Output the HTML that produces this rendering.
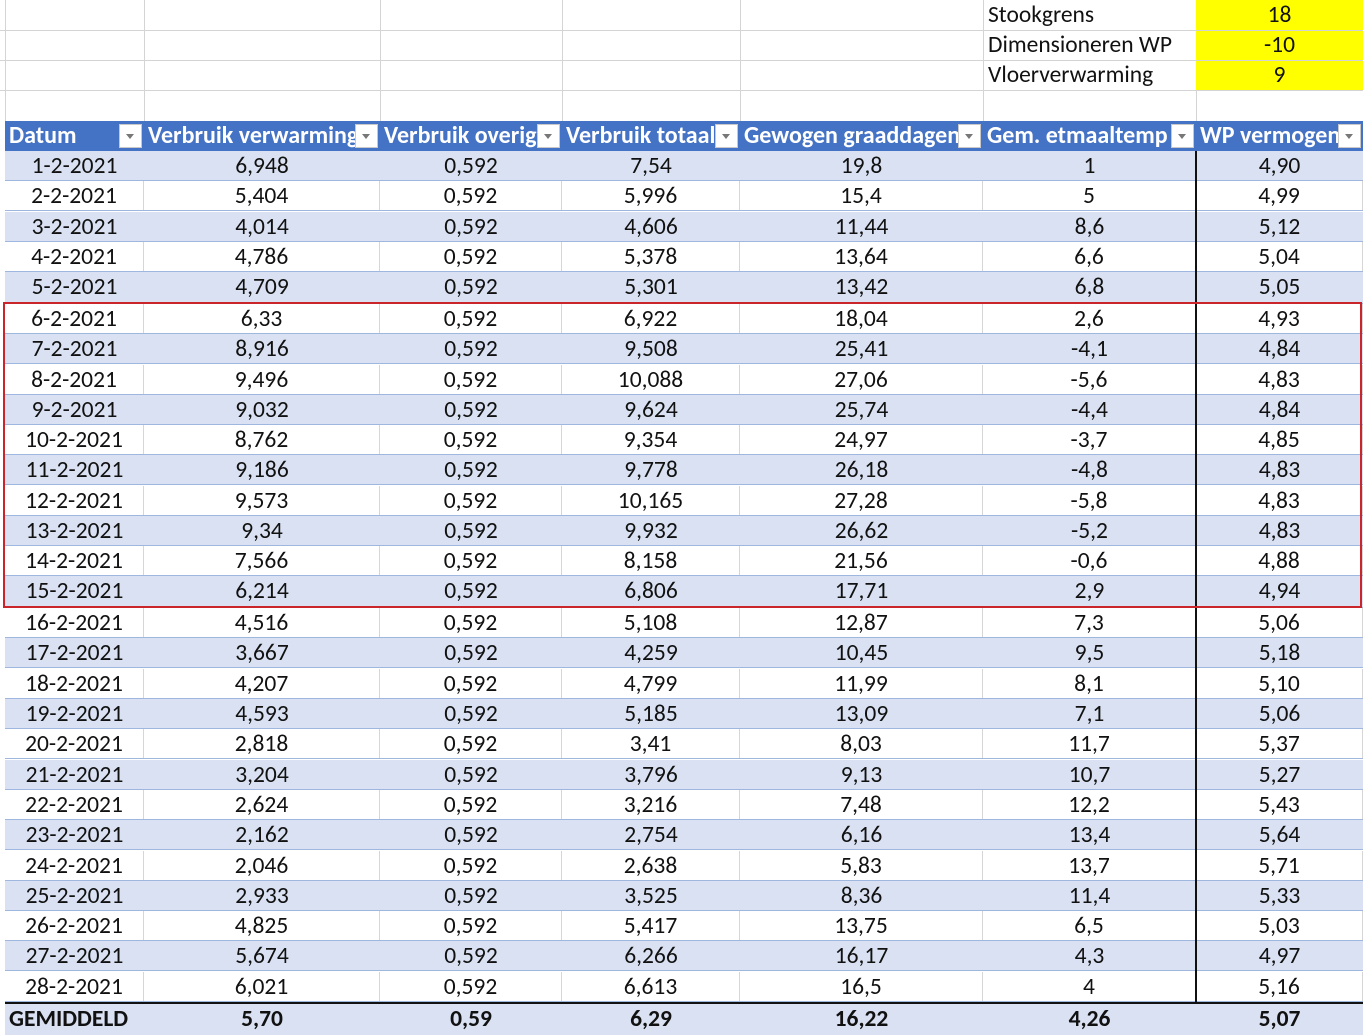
<!DOCTYPE html>
<html><head><meta charset="utf-8"><style>
body{margin:0;width:1363px;height:1035px;background:#fff;position:relative;overflow:hidden;font-family:Calibri,"Liberation Sans",sans-serif;color:#111}
.r{position:absolute;left:5px;width:1358px;height:30px;display:flex;font-size:23.5px;line-height:30px;box-sizing:border-box;border-bottom:1px solid #9fb6de}
.b{background:#d9e1f2}
.w{background:#fff}
.r span{display:block;text-align:center;overflow:hidden;white-space:nowrap;box-sizing:border-box}
.w span{border-right:1px solid #d6d6d6}
.c1{width:139px}.c2{width:236px}.c3{width:182px}.c4{width:178px}.c5{width:243px}.c6{width:213px}.c7{width:167px}
.h{position:absolute;top:121px;left:5px;width:1358px;height:30px;background:#4472c4;display:flex;color:#fff;font-weight:bold;font-size:24px;line-height:30px}
.h span{display:block;position:relative;overflow:hidden;white-space:nowrap;padding-left:4px;box-sizing:border-box}
.h span i{position:absolute;right:2px;top:3px;width:23px;height:24px;background:#fff;border:1px solid #c8c8c8;box-sizing:border-box}
.h span i:after{content:"";position:absolute;left:6px;top:9px;border-left:4px solid transparent;border-right:4px solid transparent;border-top:5px solid #777}
.g{position:absolute;background:#d4d4d4}
.t{position:absolute;font-size:23.5px;line-height:30px}
</style></head><body>
<div style="position:absolute;left:1196px;top:0;width:167px;height:90px;background:#ffff00"></div>
<div class="g" style="left:0;top:30px;width:1363px;height:1px"></div>
<div class="g" style="left:0;top:60px;width:1363px;height:1px"></div>
<div class="g" style="left:0;top:90px;width:1363px;height:1px"></div>
<div class="g" style="left:5px;top:0;width:1px;height:121px"></div>
<div class="g" style="left:144px;top:0;width:1px;height:121px"></div>
<div class="g" style="left:380px;top:0;width:1px;height:121px"></div>
<div class="g" style="left:562px;top:0;width:1px;height:121px"></div>
<div class="g" style="left:740px;top:0;width:1px;height:121px"></div>
<div class="g" style="left:983px;top:0;width:1px;height:121px"></div>
<div class="g" style="left:1196px;top:90px;width:1px;height:31px"></div>
<div class="t" style="left:988px;top:0">Stookgrens</div>
<div class="t" style="left:988px;top:30px">Dimensioneren WP</div>
<div class="t" style="left:988px;top:60px">Vloerverwarming</div>
<div class="t" style="left:1196px;width:167px;text-align:center;top:0">18</div>
<div class="t" style="left:1196px;width:167px;text-align:center;top:30px">-10</div>
<div class="t" style="left:1196px;width:167px;text-align:center;top:60px">9</div>

<div class="h"><span class="c1">Datum<i></i></span><span class="c2">Verbruik verwarming<i></i></span><span class="c3">Verbruik overig<i></i></span><span class="c4">Verbruik totaal<i></i></span><span class="c5">Gewogen graaddagen<i></i></span><span class="c6">Gem. etmaaltemp<i></i></span><span class="c7">WP vermogen<i></i></span></div>

<div class="r b" style="top:151px"><span class="c1">1-2-2021</span><span class="c2">6,948</span><span class="c3">0,592</span><span class="c4">7,54</span><span class="c5">19,8</span><span class="c6">1</span><span class="c7">4,90</span></div>
<div class="r w" style="top:181px"><span class="c1">2-2-2021</span><span class="c2">5,404</span><span class="c3">0,592</span><span class="c4">5,996</span><span class="c5">15,4</span><span class="c6">5</span><span class="c7">4,99</span></div>
<div class="r b" style="top:212px"><span class="c1">3-2-2021</span><span class="c2">4,014</span><span class="c3">0,592</span><span class="c4">4,606</span><span class="c5">11,44</span><span class="c6">8,6</span><span class="c7">5,12</span></div>
<div class="r w" style="top:242px"><span class="c1">4-2-2021</span><span class="c2">4,786</span><span class="c3">0,592</span><span class="c4">5,378</span><span class="c5">13,64</span><span class="c6">6,6</span><span class="c7">5,04</span></div>
<div class="r b" style="top:272px;height:32px"><span class="c1">5-2-2021</span><span class="c2">4,709</span><span class="c3">0,592</span><span class="c4">5,301</span><span class="c5">13,42</span><span class="c6">6,8</span><span class="c7">5,05</span></div>
<div class="r w" style="top:304px"><span class="c1">6-2-2021</span><span class="c2">6,33</span><span class="c3">0,592</span><span class="c4">6,922</span><span class="c5">18,04</span><span class="c6">2,6</span><span class="c7">4,93</span></div>
<div class="r b" style="top:334px"><span class="c1">7-2-2021</span><span class="c2">8,916</span><span class="c3">0,592</span><span class="c4">9,508</span><span class="c5">25,41</span><span class="c6">-4,1</span><span class="c7">4,84</span></div>
<div class="r w" style="top:365px"><span class="c1">8-2-2021</span><span class="c2">9,496</span><span class="c3">0,592</span><span class="c4">10,088</span><span class="c5">27,06</span><span class="c6">-5,6</span><span class="c7">4,83</span></div>
<div class="r b" style="top:395px"><span class="c1">9-2-2021</span><span class="c2">9,032</span><span class="c3">0,592</span><span class="c4">9,624</span><span class="c5">25,74</span><span class="c6">-4,4</span><span class="c7">4,84</span></div>
<div class="r w" style="top:425px"><span class="c1">10-2-2021</span><span class="c2">8,762</span><span class="c3">0,592</span><span class="c4">9,354</span><span class="c5">24,97</span><span class="c6">-3,7</span><span class="c7">4,85</span></div>
<div class="r b" style="top:455px"><span class="c1">11-2-2021</span><span class="c2">9,186</span><span class="c3">0,592</span><span class="c4">9,778</span><span class="c5">26,18</span><span class="c6">-4,8</span><span class="c7">4,83</span></div>
<div class="r w" style="top:486px"><span class="c1">12-2-2021</span><span class="c2">9,573</span><span class="c3">0,592</span><span class="c4">10,165</span><span class="c5">27,28</span><span class="c6">-5,8</span><span class="c7">4,83</span></div>
<div class="r b" style="top:516px"><span class="c1">13-2-2021</span><span class="c2">9,34</span><span class="c3">0,592</span><span class="c4">9,932</span><span class="c5">26,62</span><span class="c6">-5,2</span><span class="c7">4,83</span></div>
<div class="r w" style="top:546px"><span class="c1">14-2-2021</span><span class="c2">7,566</span><span class="c3">0,592</span><span class="c4">8,158</span><span class="c5">21,56</span><span class="c6">-0,6</span><span class="c7">4,88</span></div>
<div class="r b" style="top:576px;height:32px"><span class="c1">15-2-2021</span><span class="c2">6,214</span><span class="c3">0,592</span><span class="c4">6,806</span><span class="c5">17,71</span><span class="c6">2,9</span><span class="c7">4,94</span></div>
<div class="r w" style="top:608px"><span class="c1">16-2-2021</span><span class="c2">4,516</span><span class="c3">0,592</span><span class="c4">5,108</span><span class="c5">12,87</span><span class="c6">7,3</span><span class="c7">5,06</span></div>
<div class="r b" style="top:638px"><span class="c1">17-2-2021</span><span class="c2">3,667</span><span class="c3">0,592</span><span class="c4">4,259</span><span class="c5">10,45</span><span class="c6">9,5</span><span class="c7">5,18</span></div>
<div class="r w" style="top:669px"><span class="c1">18-2-2021</span><span class="c2">4,207</span><span class="c3">0,592</span><span class="c4">4,799</span><span class="c5">11,99</span><span class="c6">8,1</span><span class="c7">5,10</span></div>
<div class="r b" style="top:699px"><span class="c1">19-2-2021</span><span class="c2">4,593</span><span class="c3">0,592</span><span class="c4">5,185</span><span class="c5">13,09</span><span class="c6">7,1</span><span class="c7">5,06</span></div>
<div class="r w" style="top:729px"><span class="c1">20-2-2021</span><span class="c2">2,818</span><span class="c3">0,592</span><span class="c4">3,41</span><span class="c5">8,03</span><span class="c6">11,7</span><span class="c7">5,37</span></div>
<div class="r b" style="top:760px"><span class="c1">21-2-2021</span><span class="c2">3,204</span><span class="c3">0,592</span><span class="c4">3,796</span><span class="c5">9,13</span><span class="c6">10,7</span><span class="c7">5,27</span></div>
<div class="r w" style="top:790px"><span class="c1">22-2-2021</span><span class="c2">2,624</span><span class="c3">0,592</span><span class="c4">3,216</span><span class="c5">7,48</span><span class="c6">12,2</span><span class="c7">5,43</span></div>
<div class="r b" style="top:820px"><span class="c1">23-2-2021</span><span class="c2">2,162</span><span class="c3">0,592</span><span class="c4">2,754</span><span class="c5">6,16</span><span class="c6">13,4</span><span class="c7">5,64</span></div>
<div class="r w" style="top:851px"><span class="c1">24-2-2021</span><span class="c2">2,046</span><span class="c3">0,592</span><span class="c4">2,638</span><span class="c5">5,83</span><span class="c6">13,7</span><span class="c7">5,71</span></div>
<div class="r b" style="top:881px"><span class="c1">25-2-2021</span><span class="c2">2,933</span><span class="c3">0,592</span><span class="c4">3,525</span><span class="c5">8,36</span><span class="c6">11,4</span><span class="c7">5,33</span></div>
<div class="r w" style="top:911px"><span class="c1">26-2-2021</span><span class="c2">4,825</span><span class="c3">0,592</span><span class="c4">5,417</span><span class="c5">13,75</span><span class="c6">6,5</span><span class="c7">5,03</span></div>
<div class="r b" style="top:941px"><span class="c1">27-2-2021</span><span class="c2">5,674</span><span class="c3">0,592</span><span class="c4">6,266</span><span class="c5">16,17</span><span class="c6">4,3</span><span class="c7">4,97</span></div>
<div class="r w" style="top:972px"><span class="c1">28-2-2021</span><span class="c2">6,021</span><span class="c3">0,592</span><span class="c4">6,613</span><span class="c5">16,5</span><span class="c6">4</span><span class="c7">5,16</span></div>
<div style="position:absolute;left:5px;top:1002px;width:1358px;height:2px;background:#111"></div>
<div class="r b" style="top:1004px;font-weight:bold;height:31px;border:0"><span class="c1" style="text-align:left;padding-left:4px">GEMIDDELD</span><span class="c2">5,70</span><span class="c3">0,59</span><span class="c4">6,29</span><span class="c5">16,22</span><span class="c6">4,26</span><span class="c7">5,07</span></div>

<div style="position:absolute;left:1195px;top:151px;width:2px;height:852px;background:#111"></div>
<div style="position:absolute;left:3px;top:302px;width:1359px;height:306px;border:2px solid #c9252b;box-sizing:border-box"></div>
</body></html>
